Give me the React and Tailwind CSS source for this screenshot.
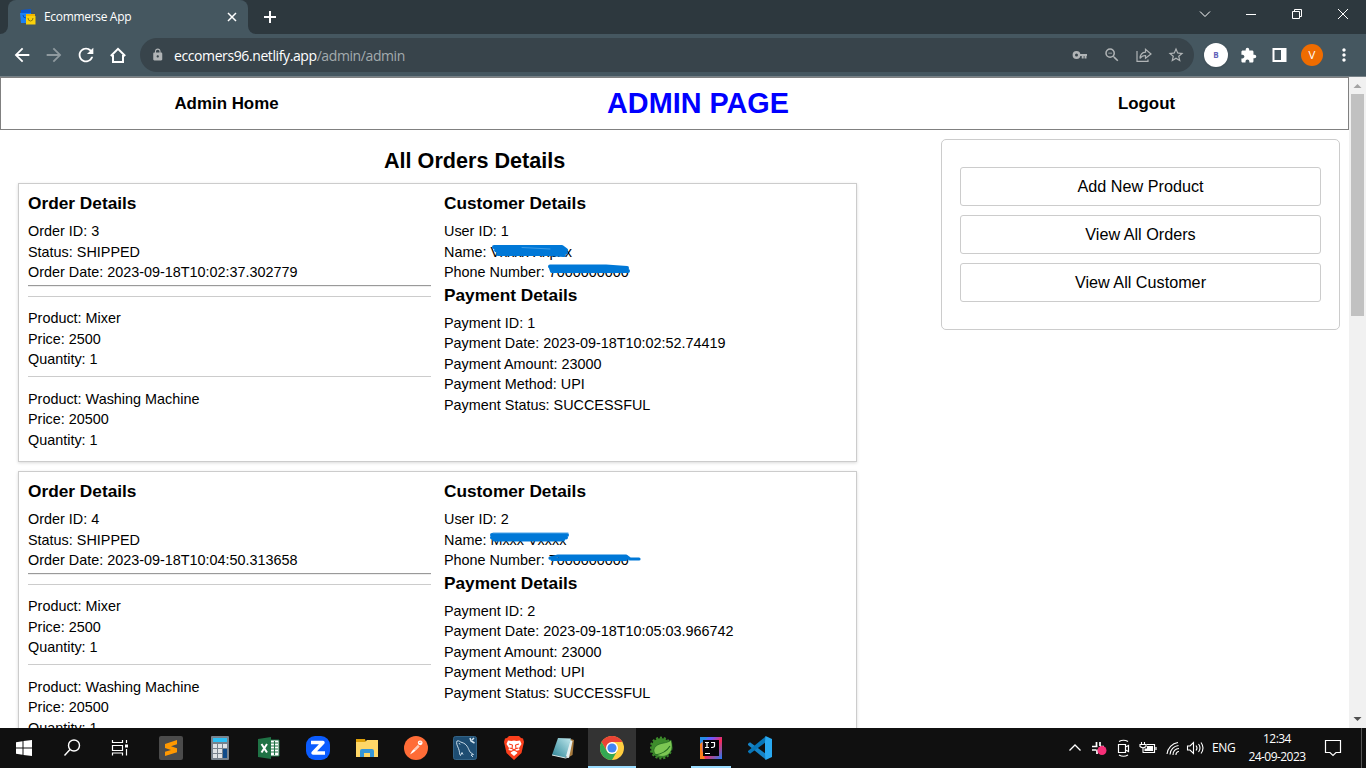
import React from "react";
import {
  MdArrowBack, MdArrowForward, MdRefresh, MdLock, MdVpnKey,
  MdZoomOut, MdStarOutline, MdExtension, MdMoreVert,
} from "react-icons/md";

const orders = [
  {
    id: 3, date: "2023-09-18T10:02:37.302779", user: 1, name: "Vxxxx Xxpxx", phone: "7000000000",
    pay: 1, payDate: "2023-09-18T10:02:52.74419",
  },
  {
    id: 4, date: "2023-09-18T10:04:50.313658", user: 2, name: "Mxxx Vxxxx", phone: "7000000000",
    pay: 2, payDate: "2023-09-18T10:05:03.966742",
  },
];

const products = [
  { name: "Mixer", price: 2500 },
  { name: "Washing Machine", price: 20500 },
];

function Line({ children }) {
  return <div className="h-[20.5px] leading-[20.5px] whitespace-nowrap">{children}</div>;
}

function Heading({ children }) {
  return <h3 className="h-5 text-[17.28px] leading-5 font-bold">{children}</h3>;
}

function NameMark({ second }) {
  return second ? (
    <svg className="absolute left-[44px] top-0" width="86" height="20" fill="none" stroke="#0078d7" strokeLinecap="round" strokeLinejoin="round">
      <path d="M4 5 H79 M4 7.500 H78 M6 9.500 H75" strokeWidth="4" />
      <path d="M5 3 H80" stroke="#4ba3e8" strokeWidth="1" />
    </svg>
  ) : (
    <svg className="absolute left-[44px] top-0" width="86" height="20" fill="none" stroke="#0078d7" strokeLinecap="round" strokeLinejoin="round">
      <path d="M6 5 H74 L78 8 H8 L12 10.500 H78 L66 12 M10 12 H60 L76 13" strokeWidth="4" />
      <path d="M34 5.500 L62 7" stroke="#4ba3e8" strokeWidth="0.800" />
    </svg>
  );
}

function PhoneMark({ second }) {
  return second ? (
    <svg className="absolute left-[102px] top-0" width="100" height="18" fill="none" stroke="#0078d7" strokeLinecap="round" strokeLinejoin="round">
      <path d="M4 8 L12 6 H80 L84 9 H93 M6 9.500 H80 M14 7.500 H80" strokeWidth="3.200" />
    </svg>
  ) : (
    <svg className="absolute left-[102px] top-0" width="90" height="18" fill="none" stroke="#0078d7" strokeLinecap="round" strokeLinejoin="round">
      <path d="M4 4.500 H60 L81 6 H5 L6 9 H82" strokeWidth="4" />
    </svg>
  );
}

function OrderCard({ order, second }) {
  return (
    <section className="flex h-[279px] w-[839px] shrink-0 gap-[13px] border border-[#ccc] px-[9px] pt-[9px] text-[14.4px] shadow-[0_1px_3px_rgba(0,0,0,0.15)]">
      <div className="w-[403px]">
        <Heading>Order Details</Heading>
        <div className="pt-[8.25px]">
          <Line>Order ID: {order.id}</Line>
          <Line>Status: SHIPPED</Line>
          <Line>Order Date: {order.date}</Line>
        </div>
        <div className="mt-[2.25px] h-[2px] border-t border-b border-t-[#9a9a9a] border-b-[#eee]" />
        <div className="pt-[9px]">
          {products.map((p) => (
            <div key={p.name} className="h-[80.400px] border-t border-[#ccc] pt-[11.200px]">
              <Line>Product: {p.name}</Line>
              <Line>Price: {p.price}</Line>
              <Line>Quantity: 1</Line>
            </div>
          ))}
        </div>
      </div>
      <div className="w-[403px]">
        <Heading>Customer Details</Heading>
        <div className="pt-[8.25px]">
          <Line>User ID: {order.user}</Line>
          <div className="relative">
            <Line>Name: {order.name}</Line>
            <NameMark second={second} />
          </div>
          <div className="relative">
            <Line>Phone Number: {order.phone}</Line>
            <PhoneMark second={second} />
          </div>
        </div>
        <div className="pt-[2.25px]">
          <Heading>Payment Details</Heading>
        </div>
        <div className="pt-[7.75px]">
          <Line>Payment ID: {order.pay}</Line>
          <Line>Payment Date: {order.payDate}</Line>
          <Line>Payment Amount: 23000</Line>
          <Line>Payment Method: UPI</Line>
          <Line>Payment Status: SUCCESSFUL</Line>
        </div>
      </div>
    </section>
  );
}

function TabBar() {
  return (
    <div className="flex h-[34px] shrink-0 bg-[#2d383e]">
      <div className="flex w-2 items-end bg-[#455760]">
        <div className="h-full w-full rounded-br-lg bg-[#2d383e]" />
      </div>
      <div className="flex w-[240px] items-center rounded-t-lg bg-[#455760] pr-[10px] pl-3">
        <svg width="16" height="16" viewBox="0 0 16 16">
          <path d="M1 1 L11 0 V4 H1Z" fill="#0b57d0" />
          <path d="M0 4 H11 V14 H1Z" fill="#1a80f5" />
          <path d="M3 6 Q3 9 6 9" stroke="#0b4fae" fill="none" />
          <path d="M6 5 H15 V7 H6Z" fill="#f1b600" />
          <path d="M6 7 H15.500 V15.500 H6Z" fill="#fbd10b" />
          <path d="M8 9 Q8 12 10.500 12 T13 9" stroke="#8a7a10" fill="none" />
        </svg>
        <span className="ml-2 grow text-[12px] tracking-[-0.32px] text-white">Ecommerse App</span>
        <svg width="12" height="12" viewBox="0 0 12 12"><path d="M2 2 L10 10 M10 2 L2 10" stroke="#fff" strokeWidth="1.500" /></svg>
      </div>
      <div className="flex w-2 bg-[#455760]">
        <div className="h-full w-full rounded-bl-lg bg-[#2d383e]" />
      </div>
      <div className="flex w-7 items-center justify-center">
        <svg width="12" height="12" viewBox="0 0 12 12"><path d="M6 0 V12 M0 6 H12" stroke="#fff" strokeWidth="2" /></svg>
      </div>
      <div className="flex grow items-start justify-end">
        <svg className="mt-[7px]" width="184" height="14" viewBox="0 0 184 14" fill="none" stroke="#fff">
          <path d="M18 4.500 L23 9.500 L28 4.500" />
          <path d="M64 7.500 H74" />
          <path d="M110.500 4.500 H117.500 V11.500 H110.500Z M112.500 4 V2.500 H119.500 V9.500 H118" />
          <path d="M156 2 L166 12 M166 2 L156 12" />
        </svg>
      </div>
    </div>
  );
}

function Toolbar() {
  return (
    <div className="flex h-[42px] shrink-0 items-center bg-[#455760]">
      <div className="flex w-[140px] items-center pl-[11px] text-white">
        <MdArrowBack size={22} />
        <MdArrowForward size={22} className="ml-[10px] text-[#8f9a9f]" />
        <MdRefresh size={22} className="ml-[10px]" />
        <svg className="ml-[13px]" width="16" height="17" viewBox="0 0 16 17" fill="none" stroke="currentColor" strokeWidth="2">
          <path d="M0.800 9 L8 1.800 L15.200 9 M3 8 V15 H13 V8" />
        </svg>
      </div>
      <div className="flex h-[34px] w-[1054px] items-center rounded-full bg-[#38444b] pl-[11px] text-[#b0b4b6]">
        <MdLock size={13.500} />
        <span className="ml-[9.500px] grow text-[14px] tracking-[-0.4px] text-[#a3abae]">
          <span className="text-white">eccomers96.netlify.app</span>/admin/admin
        </span>
        <div className="flex w-[122px] items-center gap-4">
          <svg className="shrink-0" width="16" height="16" viewBox="0 0 16 16" fill="none" stroke="currentColor">
            <circle cx="4.500" cy="8" r="2.700" strokeWidth="2.400" />
            <path d="M7 8 H15 M10.700 8 V11.500 M13.500 8 V11.500" strokeWidth="2" />
          </svg>
          <div className="flex w-4 justify-center"><MdZoomOut size={18} className="shrink-0" /></div>
          <svg className="shrink-0" width="16" height="16" viewBox="0 0 16 16" fill="none" stroke="currentColor" strokeWidth="1.200">
            <path d="M1 4 V14.400 H12 V12.500" />
            <path d="M4 11.500 C4.200 7.500 6 5.500 9.500 5.200 V2.200 L15 7 L9.500 11.300 V8.500 C7 8.500 5.200 9.500 4 11.500Z" />
          </svg>
          <div className="flex w-4 justify-center"><MdStarOutline size={18} className="shrink-0" /></div>
        </div>
      </div>
      <div className="flex grow items-center pl-[10px] text-white">
        <div className="flex size-6 shrink-0 items-center justify-center rounded-full bg-white text-[8px] font-bold text-[#6262b8] shadow">B</div>
        <MdExtension size={17} className="ml-[12px] shrink-0" />
        <svg className="ml-[15px] shrink-0" width="15" height="14" viewBox="0 0 15 14"><path d="M0.500 0 H14.500 V14 H0.500Z M2.500 2 V12 H9 V2Z" fill="#fff" fillRule="evenodd" /></svg>
        <div className="ml-[14px] flex size-[22px] shrink-0 items-center justify-center rounded-full bg-[#ef6c00] text-[11.500px]">V</div>
        <MdMoreVert size={20} className="ml-[11px] shrink-0" />
      </div>
    </div>
  );
}

function WebPage() {
  return (
    <div className="flex h-[651px] shrink-0 overflow-hidden bg-white font-['Liberation_Sans',Arial,sans-serif] text-black">
      <main className="flex w-[1349px] shrink-0 flex-col">
        <header className="flex h-[53px] shrink-0 items-center border border-[#808080] text-[16.900px] font-bold">
          <div className="w-[451px] text-center">Admin Home</div>
          <h1 className="w-[492px] pb-px text-center text-[28.800px] leading-none text-[#0000ff]">ADMIN PAGE</h1>
          <div className="w-[404px] pl-px text-center">Logout</div>
        </header>
        <div className="flex">
          <div className="flex w-[941px] flex-col gap-[9px] pl-[18px]">
            <h2 className="mb-[-9px] h-[53px] pt-[19px] pl-[366px] text-[21.600px] leading-6 font-bold">All Orders Details</h2>
            {orders.map((o, i) => <OrderCard key={o.id} order={o} second={i === 1} />)}
          </div>
          <nav className="mt-[9px] flex h-[191px] w-[399px] flex-col gap-[9px] rounded-[5px] border border-[#ccc] px-[18px] pt-[27px] text-[16.200px]">
            {["Add New Product", "View All Orders", "View All Customer"].map((t) => (
              <button key={t} className="h-[39px] shrink-0 rounded-[3px] border border-[#ccc]">{t}</button>
            ))}
          </nav>
        </div>
      </main>
      <div className="flex w-[17px] flex-col items-center justify-between bg-[#f1f1f1]">
        <svg width="17" height="17"><path d="M4.500 11 L8.500 7 L12.500 11Z" fill="#a3a3a3" /></svg>
        <div className="mb-auto h-[222px] w-[13px] bg-[#c1c1c1]" />
        <svg width="17" height="17"><path d="M4.500 6 L8.500 10 L12.500 6Z" fill="#505050" /></svg>
      </div>
    </div>
  );
}

function Slot({ children, active, open }) {
  return (
    <div className={`flex h-10 w-[49px] items-center justify-center ${active ? "bg-[linear-gradient(#333,#333)] bg-size-[48px_40px] bg-no-repeat" : ""}`}>
      <div className={`flex h-10 items-center justify-center ${active ? "mr-px w-12 border-b-2 border-[#9adcff]" : open ? "w-10 border-b-2 border-[#9adcff]" : "w-10 border-b-2 border-transparent"}`}>
        <div className="pt-[2px]">{children}</div>
      </div>
    </div>
  );
}

function Taskbar() {
  return (
    <div className="flex h-10 shrink-0 bg-[#101010] text-white">
      <div className="flex w-[146px] items-center">
        <svg width="146" height="40" fill="none" stroke="#fff">
          <path d="M16 14.200 L22.500 13.300 V19.400 H16Z M23.500 13.100 L32 12 V19.400 H23.500Z M16 20.500 H22.500 V26.700 L16 25.800Z M23.500 20.500 H32 V28 L23.500 26.900Z" fill="#fff" stroke="none" />
          <circle cx="74" cy="17.500" r="5.500" strokeWidth="1.400" />
          <path d="M70 21.500 L64.500 27.500" strokeWidth="1.400" />
          <path d="M112.500 12 V14.500 H122.500 V12 M112.500 27.500 V25 H122.500 V27.500 M112.500 17.500 H122.500 V22.500 H112.500Z M126.500 12 V15 M126.500 21 V27.500" strokeWidth="1.200" />
          <path d="M125 16.500 H128 V19.500 H125Z" fill="#fff" stroke="none" />
        </svg>
      </div>
      <Slot>
        <svg width="24" height="24" viewBox="0 0 24 24"><rect width="24" height="24" rx="2" fill="#4b4b4b" /><path d="M6 8 L18 4 V8.200 L12 10.200 L18 12.200 V16.200 L6 20 V15.800 L12 14 L6 12Z" fill="#ff9800" /></svg>
      </Slot>
      <Slot>
        <svg width="18" height="24" viewBox="0 0 18 24">
          <rect width="18" height="24" rx="1" fill="#77828d" /><rect x="2" y="2" width="14" height="4" fill="#2cc0f5" />
          <path d="M2 8h4v4H2zM7 8h4v4H7zM12 8h4v4h-4zM2 13h4v4H2zM7 13h4v4H7zM2 18h4v4H2zM7 18h4v4H7z" fill="#dfe3e7" /><path d="M12 13h4v9h-4z" fill="#0f4b8a" />
        </svg>
      </Slot>
      <Slot>
        <svg width="24" height="22" viewBox="0 0 24 22">
          <path d="M12 3h10v16H12z" fill="#fff" stroke="#1f7245" /><path d="M13 6h8M13 9h8M13 12h8M13 15h8M17.500 4v14" stroke="#1f7245" strokeWidth="1.100" />
          <path d="M1 2 L14 0 V22 L1 20Z" fill="#1f7245" /><path d="M4.500 7 L10 15.500 M10 7 L4.500 15.500" stroke="#fff" strokeWidth="2" />
        </svg>
      </Slot>
      <Slot>
        <svg width="24" height="24" viewBox="0 0 24 24"><rect width="24" height="24" rx="9" fill="#0b5cff" /><path d="M5 6.500 H17 L7 17 H19" stroke="#fff" strokeWidth="3.400" fill="none" strokeLinejoin="round" /></svg>
      </Slot>
      <Slot>
        <svg width="22" height="20" viewBox="0 0 22 20"><path d="M0 1 H9 L10 4 H0Z" fill="#dfa008" /><path d="M0 4 H9 L11 2 H22 V19 H0Z" fill="#ffd767" /><path d="M4 19 V13 Q4 11 6 11 H16 Q18 11 18 13 V19 H14 V15 H8 V19Z" fill="#3596d8" /></svg>
      </Slot>
      <Slot>
        <svg width="24" height="24" viewBox="0 0 24 24"><circle cx="12" cy="12" r="12" fill="#ff6c37" /><path d="M6 18.500 L8 15 L14 9 L15.500 10.500 L10 16Z" fill="#fff" /><circle cx="16.200" cy="6.800" r="2.400" fill="#fff" /><path d="M10.500 14 L15 9.500 M15 6.500 L17.500 6" stroke="#ff6c37" strokeWidth="0.700" /></svg>
      </Slot>
      <Slot>
        <svg width="24" height="24" viewBox="0 0 24 24" fill="none" stroke="#d8e8f2" strokeWidth="0.900"><rect x="0.500" y="0.500" width="23" height="23" rx="2" fill="#1e4d72" stroke="#35698d" /><path d="M7.500 19.500 C6 18 7 16 5.500 12.500 C4 9 3 7 4 5 C6 4 7.500 6.500 9 6.500 C14 8 15 12 16.500 15 C17 17 19 17 20.500 18.500 L18 19 L20 21 M7.500 19.500 L9 16.500 L10 18.500 M6 7 L7 8.500" /><path d="M17 2 L18 5 L21.500 7 M21 2 L19 4" strokeWidth="1.500" /></svg>
      </Slot>
      <Slot>
        <svg width="20" height="24" viewBox="0 0 20 24">
          <path d="M5 0 H15 L17 2 L19 2.500 L20 6 L17.500 17 L10 24 L2.500 17 L0 6 L1 2.500 L3 2Z" fill="#fb3f1c" />
          <path d="M4 4.500 L7.500 5 L10 4.500 L12.500 5 L16 4.500 L17.500 8 L15 12 L15.500 14 L12 15 L13.500 17 L10 20 L6.500 17 L8 15 L4.500 14 L5 12 L2.500 8Z" fill="#fff" />
          <path d="M5 8 L8.500 9 M15 8 L11.500 9 M8.500 9 L8 12.500 L10 14 L12 12.500 L11.500 9 M7 15.500 L10 14 L13 15.500 M5.500 12 L7.500 12.500 M14.500 12 L12.500 12.500" stroke="#fb3f1c" strokeWidth="1.100" fill="none" />
        </svg>
      </Slot>
      <Slot>
        <svg width="24" height="22" viewBox="0 0 24 22"><defs><linearGradient id="note" x1="1" y1="0" x2="0" y2="1"><stop stopColor="#c2e9ee" /><stop offset="0.600" stopColor="#65acb9" /><stop offset="1" stopColor="#2b7f91" /></linearGradient></defs><path d="M20 2 L23 3 L21.500 18 L18 20Z" fill="#a77a3d" /><path d="M19 3 L21.500 4 L18 21 L14 19Z" fill="#e5eff0" /><path d="M7 1 L20 1.500 L14.500 21 L1 18Z" fill="url(#note)" /><path d="M1 18 L14.500 21 L18 20" stroke="#dce9e9" fill="none" /></svg>
      </Slot>
      <div className="w-px" />
      <Slot active>
        <svg width="24" height="24" viewBox="0 0 24 24"><circle cx="12" cy="12" r="12" fill="#ffcd40" /><path d="M1.600 6 A12 12 0 0 1 22.400 6 H12 L6.800 15Z" fill="#ea4335" /><path d="M1.600 6 A12 12 0 0 0 12 24 L17.200 15 A6 6 0 0 1 6.800 15Z" fill="#34a853" /><circle cx="12" cy="12" r="6" fill="#fff" /><circle cx="12" cy="12" r="4.600" fill="#4285f4" /></svg>
      </Slot>
      <Slot>
        <svg width="24" height="24" viewBox="0 0 24 24"><circle cx="11" cy="12" r="10" fill="#3d8c2b" /><circle cx="11" cy="12" r="10.500" fill="none" stroke="#3d8c2b" strokeWidth="1.800" strokeDasharray="2.200 1.800" /><path d="M21 4 C17 8 11 6 6 10 C2 14 4 19 9 20 C17 22 25 16 21 4Z" fill="#7cc653" stroke="#1b5e20" strokeWidth="0.600" /><path d="M5 19 C12 18 17 15 20 10" stroke="#246d21" fill="none" strokeWidth="1.100" /></svg>
      </Slot>
      <Slot open>
        <svg width="22" height="22" viewBox="0 0 22 22"><defs><linearGradient id="ij" x1="0" y1="0" x2="1" y2="1"><stop stopColor="#2196f3" /><stop offset="0.300" stopColor="#6b57ff" /><stop offset="0.550" stopColor="#fe2857" /><stop offset="1" stopColor="#1e7dfa" /></linearGradient></defs><rect width="22" height="22" fill="url(#ij)" /><path d="M0 0 H2.500 V14 L5 22 H0Z" fill="#fc801d" /><path d="M0 0 H8 L0 7Z" fill="#258de8" /><rect x="3" y="3" width="16" height="16" fill="#050308" /><path d="M5 5.500 H9 M7 5.500 V10.500 M5 10.500 H9 M11 5.500 H14.500 V9 Q14.500 10.500 11 10.500 M5 16.500 H10" stroke="#fff" strokeWidth="1.200" fill="none" /></svg>
      </Slot>
      <div className="mr-[-1px]">
        <Slot>
          <svg width="24" height="24" viewBox="0 0 24 24"><path d="M0 7.800 L2 6.200 L18 18 V23.800 L0 9Z" fill="#1684c7" /><path d="M0 16 L2 17.800 L18 6 V0.200 L0 15Z" fill="#0876b8" /><path d="M17.500 0 L24 3 V21 L17.500 24 L17 18 V6Z" fill="#29a9f1" /></svg>
        </Slot>
      </div>
      <div className="flex grow items-center justify-end">
        <svg width="144" height="40" fill="none" stroke="#fff" className="shrink-0">
          <path d="M7.500 22.500 L13 17 L18.500 22.500" strokeWidth="1.300" />
          <path d="M34.500 14 V18 M38 14 V18 M30 18.500 H35.500 M30 22 H34 M35 21.500 V26 M38 18.500 H42 M38 21 V24" strokeWidth="1.700" />
          <circle cx="40" cy="22.500" r="4.500" fill="#f62f78" stroke="none" />
          <path d="M56.500 16.500 H63.500 V24.500 H56.500Z M63.500 19 L66.500 17.500 V23.500 L63.500 22 M57 13.500 Q61.500 11 66 13.500 M57 27 Q61.500 29.500 66 27" strokeWidth="1.200" />
          <path d="M84.500 16.500 H92.500 V24.500 H80.500 M94 19 V22" strokeWidth="1.200" /><path d="M85 18 H91 V23 H82.500 V20.500 H85Z" fill="#fff" stroke="none" /><path d="M78 16.500 H84 V18.500 Q81 21 78 18.500Z M79.500 14 V16 M82.500 14 V16 M81 20 V24" strokeWidth="1.100" />
          <path d="M105 26 A13 13 0 0 1 116 14.500 M108 26.500 A9.500 9.500 0 0 1 116.500 17.500 M111 27 A6 6 0 0 1 117 20.500 M114 27 A3 3 0 0 1 117 23.500" strokeWidth="1.100" />
          <path d="M125.500 18 H128 L131.500 14.500 V25.500 L128 22 H125.500Z M134 17.500 Q136 20 134 22.500 M136.500 16 Q139.500 20 136.500 24 M139 14.500 Q143 20 139 25.500" strokeWidth="1.100" />
        </svg>
        <span className="ml-[6px] w-[24px] text-[12px] tracking-[-0.300px]">ENG</span>
        <div className="ml-[7px] w-[68px] text-center text-[12px] leading-[18px] tracking-[-0.550px] whitespace-nowrap">
          <div>12:34</div>
          <div>24-09-2023</div>
        </div>
        <svg width="55" height="40" fill="none" stroke="#fff" className="shrink-0">
          <path d="M14.500 12.500 H29.500 V24.500 H25 L22 27.500 L19 24.500 H14.500Z" strokeWidth="1.200" />
          <path d="M50.500 0 V40" stroke="#555" />
        </svg>
      </div>
    </div>
  );
}

export default function App() {
  return (
    <div className="flex h-[768px] w-[1366px] flex-col overflow-hidden font-['Open_Sans','Noto_Sans',sans-serif]">
      <TabBar />
      <Toolbar />
      <div className="h-px shrink-0 bg-[#768187]" />
      <WebPage />
      <Taskbar />
    </div>
  );
}
